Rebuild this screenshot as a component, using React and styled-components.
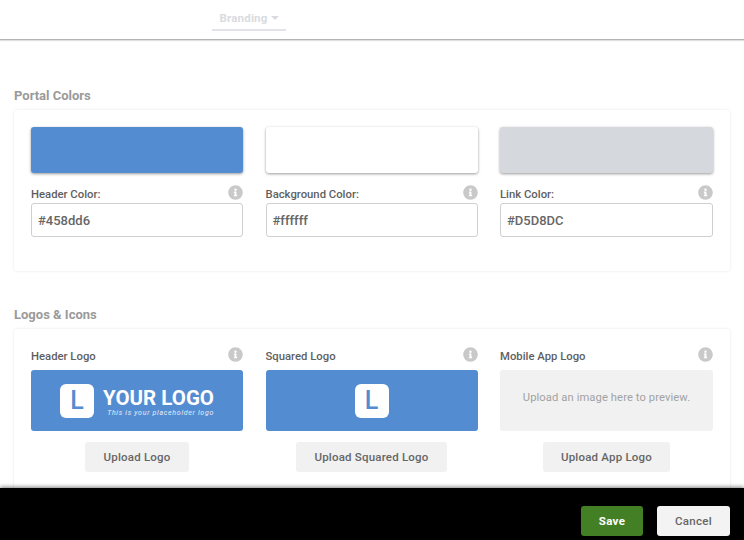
import React from "react";
import styled, { createGlobalStyle } from "styled-components";
import { FaInfoCircle } from "react-icons/fa";

const GlobalStyle = createGlobalStyle`
  html, body {
    margin: 0;
    padding: 0;
    background: #fff;
    font-family: Roboto, "Liberation Sans", sans-serif;
    overflow: hidden;
  }
  * {
    box-sizing: border-box;
  }
`;

const Page = styled.div`
  width: 744px;
  height: 540px;
  display: flex;
  flex-direction: column;
  overflow: hidden;
`;

const TopBar = styled.header`
  height: 40px;
  flex: none;
  padding-left: 212px;
  background: #fff;
  border-bottom: 1px solid #b4b4b6;
  box-shadow: 0 1px 1px rgba(0, 0, 0, 0.12);
  z-index: 1;
`;

const TabItem = styled.div`
  width: 74px;
  height: 31px;
  padding-top: 11px;
  display: flex;
  justify-content: center;
  gap: 3px;
  font-size: 11.5px;
  line-height: 14px;
  font-weight: 700;
  letter-spacing: 0.2px;
  color: #d9dbe0;
  border-bottom: 2px solid #e2e3ea;
`;

const Caret = styled.span`
  width: 0;
  height: 0;
  margin-top: 5px;
  border-left: 4px solid transparent;
  border-right: 4px solid transparent;
  border-top: 4px solid #d9dbe0;
`;

const Main = styled.main`
  flex: 1;
  min-height: 0;
  overflow: hidden;
  padding: 48px 14px 0;
`;

const SectionTitle = styled.h2`
  margin: 0 0 7px;
  font-size: 13px;
  line-height: 15px;
  font-weight: 700;
  color: #9a9a9a;
`;

const Card = styled.section`
  background: #fff;
  border-radius: 3px;
  padding: ${(props) => props.$padding};
  margin-bottom: ${(props) => props.$bottom || 0}px;
  height: ${(props) => props.$height}px;
  box-shadow: 0 0 3px rgba(0, 0, 0, 0.1);
  display: grid;
  grid-template-columns: 212px 212px 213px;
  column-gap: 22.5px;
`;

const Column = styled.div`
  display: flex;
  flex-direction: column;
  min-width: 0;
`;

const Swatch = styled.div`
  height: 46px;
  border-radius: 3px;
  background: ${(props) => props.$color};
  box-shadow: 0 1px 3px rgba(0, 0, 0, 0.4);
`;

const LabelRow = styled.div`
  display: flex;
  align-items: center;
  justify-content: space-between;
  height: ${(props) => props.$height}px;
  margin-top: ${(props) => props.$top || 0}px;
  padding-top: ${(props) => props.$inset || 0}px;
  font-size: 11.3px;
  font-weight: 500;
  color: #5f5f5f;
`;

const InfoIcon = styled(FaInfoCircle)`
  width: 15px;
  height: 15px;
  margin-bottom: ${(props) => props.$raise || 0}px;
  color: #c9c9c9;
`;

const ColorInput = styled.div`
  height: 34px;
  border: 1px solid #cfcfcf;
  border-radius: 3px;
  padding: 0 6px;
  display: flex;
  align-items: center;
  font-size: 13px;
  font-weight: 500;
  color: #666;
`;

const Preview = styled.div`
  height: 61px;
  border-radius: 3px;
  background: ${(props) => props.$color};
  display: flex;
  align-items: center;
  justify-content: center;
  gap: 10px;
`;

const LogoTile = styled.div`
  width: 34px;
  height: 34px;
  border-radius: 6px;
  background: #fff;
  color: #548cd2;
  font-size: 25px;
  font-weight: 500;
  line-height: 34px;
  text-align: center;
`;

const Wordmark = styled.div`
  width: 110px;
  padding-top: 4px;
  display: flex;
  flex-direction: column;
  align-items: flex-end;
  color: #fff;
`;

const LogoName = styled.div`
  font-size: 20.5px;
  line-height: 21px;
  font-weight: 700;
  white-space: nowrap;
`;

const LogoTagline = styled.div`
  font-size: 7px;
  line-height: 9px;
  font-style: italic;
  letter-spacing: 0.7px;
  white-space: nowrap;
  opacity: 0.85;
`;

const Hint = styled.span`
  font-size: 11.2px;
  letter-spacing: 0.1px;
  color: #a2a2a2;
  position: relative;
  top: -3px;
`;

const UploadButton = styled.button`
  align-self: center;
  height: 30px;
  min-width: 104px;
  margin-top: 11px;
  padding: 0 18px;
  border: 0;
  border-radius: 3px;
  background: #f1f1f1;
  font-family: inherit;
  font-size: 11.5px;
  font-weight: 500;
  letter-spacing: 0.2px;
  color: #666;
`;

const Footer = styled.footer`
  height: 52px;
  flex: none;
  background: #000;
  box-shadow: 0 -1px 4px rgba(0, 0, 0, 0.5);
  padding: 18px 14px 0 0;
  display: flex;
  justify-content: flex-end;
  gap: 14px;
  z-index: 1;
`;

const FooterButton = styled.button`
  width: ${(props) => props.$width}px;
  height: 30px;
  border: 0;
  border-radius: 3px;
  background: ${(props) => (props.$primary ? "#437f25" : "#f3f3f3")};
  color: ${(props) => (props.$primary ? "#fff" : "#666")};
  font-family: inherit;
  font-size: 11.5px;
  font-weight: ${(props) => (props.$primary ? 700 : 500)};
  letter-spacing: 0.3px;
`;

const colors = [
  { label: "Header Color:", value: "#458dd6", swatch: "#548cd2" },
  { label: "Background Color:", value: "#ffffff", swatch: "#ffffff" },
  { label: "Link Color:", value: "#D5D8DC", swatch: "#d5d8dc" },
];

export default function App() {
  return (
    <Page>
      <GlobalStyle />
      <TopBar>
        <TabItem>
          Branding
          <Caret />
        </TabItem>
      </TopBar>
      <Main>
        <SectionTitle>Portal Colors</SectionTitle>
        <Card $padding="17px 17px 0" $height={161} $bottom={36}>
          {colors.map((color) => (
            <Column key={color.label}>
              <Swatch $color={color.swatch} />
              <LabelRow $height={19} $top={11} $inset={2}>
                {color.label}
                <InfoIcon $raise={4} />
              </LabelRow>
              <ColorInput>{color.value}</ColorInput>
            </Column>
          ))}
        </Card>
        <SectionTitle>Logos &amp; Icons</SectionTitle>
        <Card $padding="14px 17px 0" $height={180}>
          <Column>
            <LabelRow $height={27}>
              Header Logo
              <InfoIcon $raise={4} />
            </LabelRow>
            <Preview $color="#548cd2">
              <LogoTile>L</LogoTile>
              <Wordmark>
                <LogoName>YOUR LOGO</LogoName>
                <LogoTagline>This is your placeholder logo</LogoTagline>
              </Wordmark>
            </Preview>
            <UploadButton>Upload Logo</UploadButton>
          </Column>
          <Column>
            <LabelRow $height={27}>
              Squared Logo
              <InfoIcon $raise={4} />
            </LabelRow>
            <Preview $color="#548cd2">
              <LogoTile>L</LogoTile>
            </Preview>
            <UploadButton>Upload Squared Logo</UploadButton>
          </Column>
          <Column>
            <LabelRow $height={27}>
              Mobile App Logo
              <InfoIcon $raise={4} />
            </LabelRow>
            <Preview $color="#f1f1f1">
              <Hint>Upload an image here to preview.</Hint>
            </Preview>
            <UploadButton>Upload App Logo</UploadButton>
          </Column>
        </Card>
      </Main>
      <Footer>
        <FooterButton $primary $width={62}>
          Save
        </FooterButton>
        <FooterButton $width={73}>Cancel</FooterButton>
      </Footer>
    </Page>
  );
}
